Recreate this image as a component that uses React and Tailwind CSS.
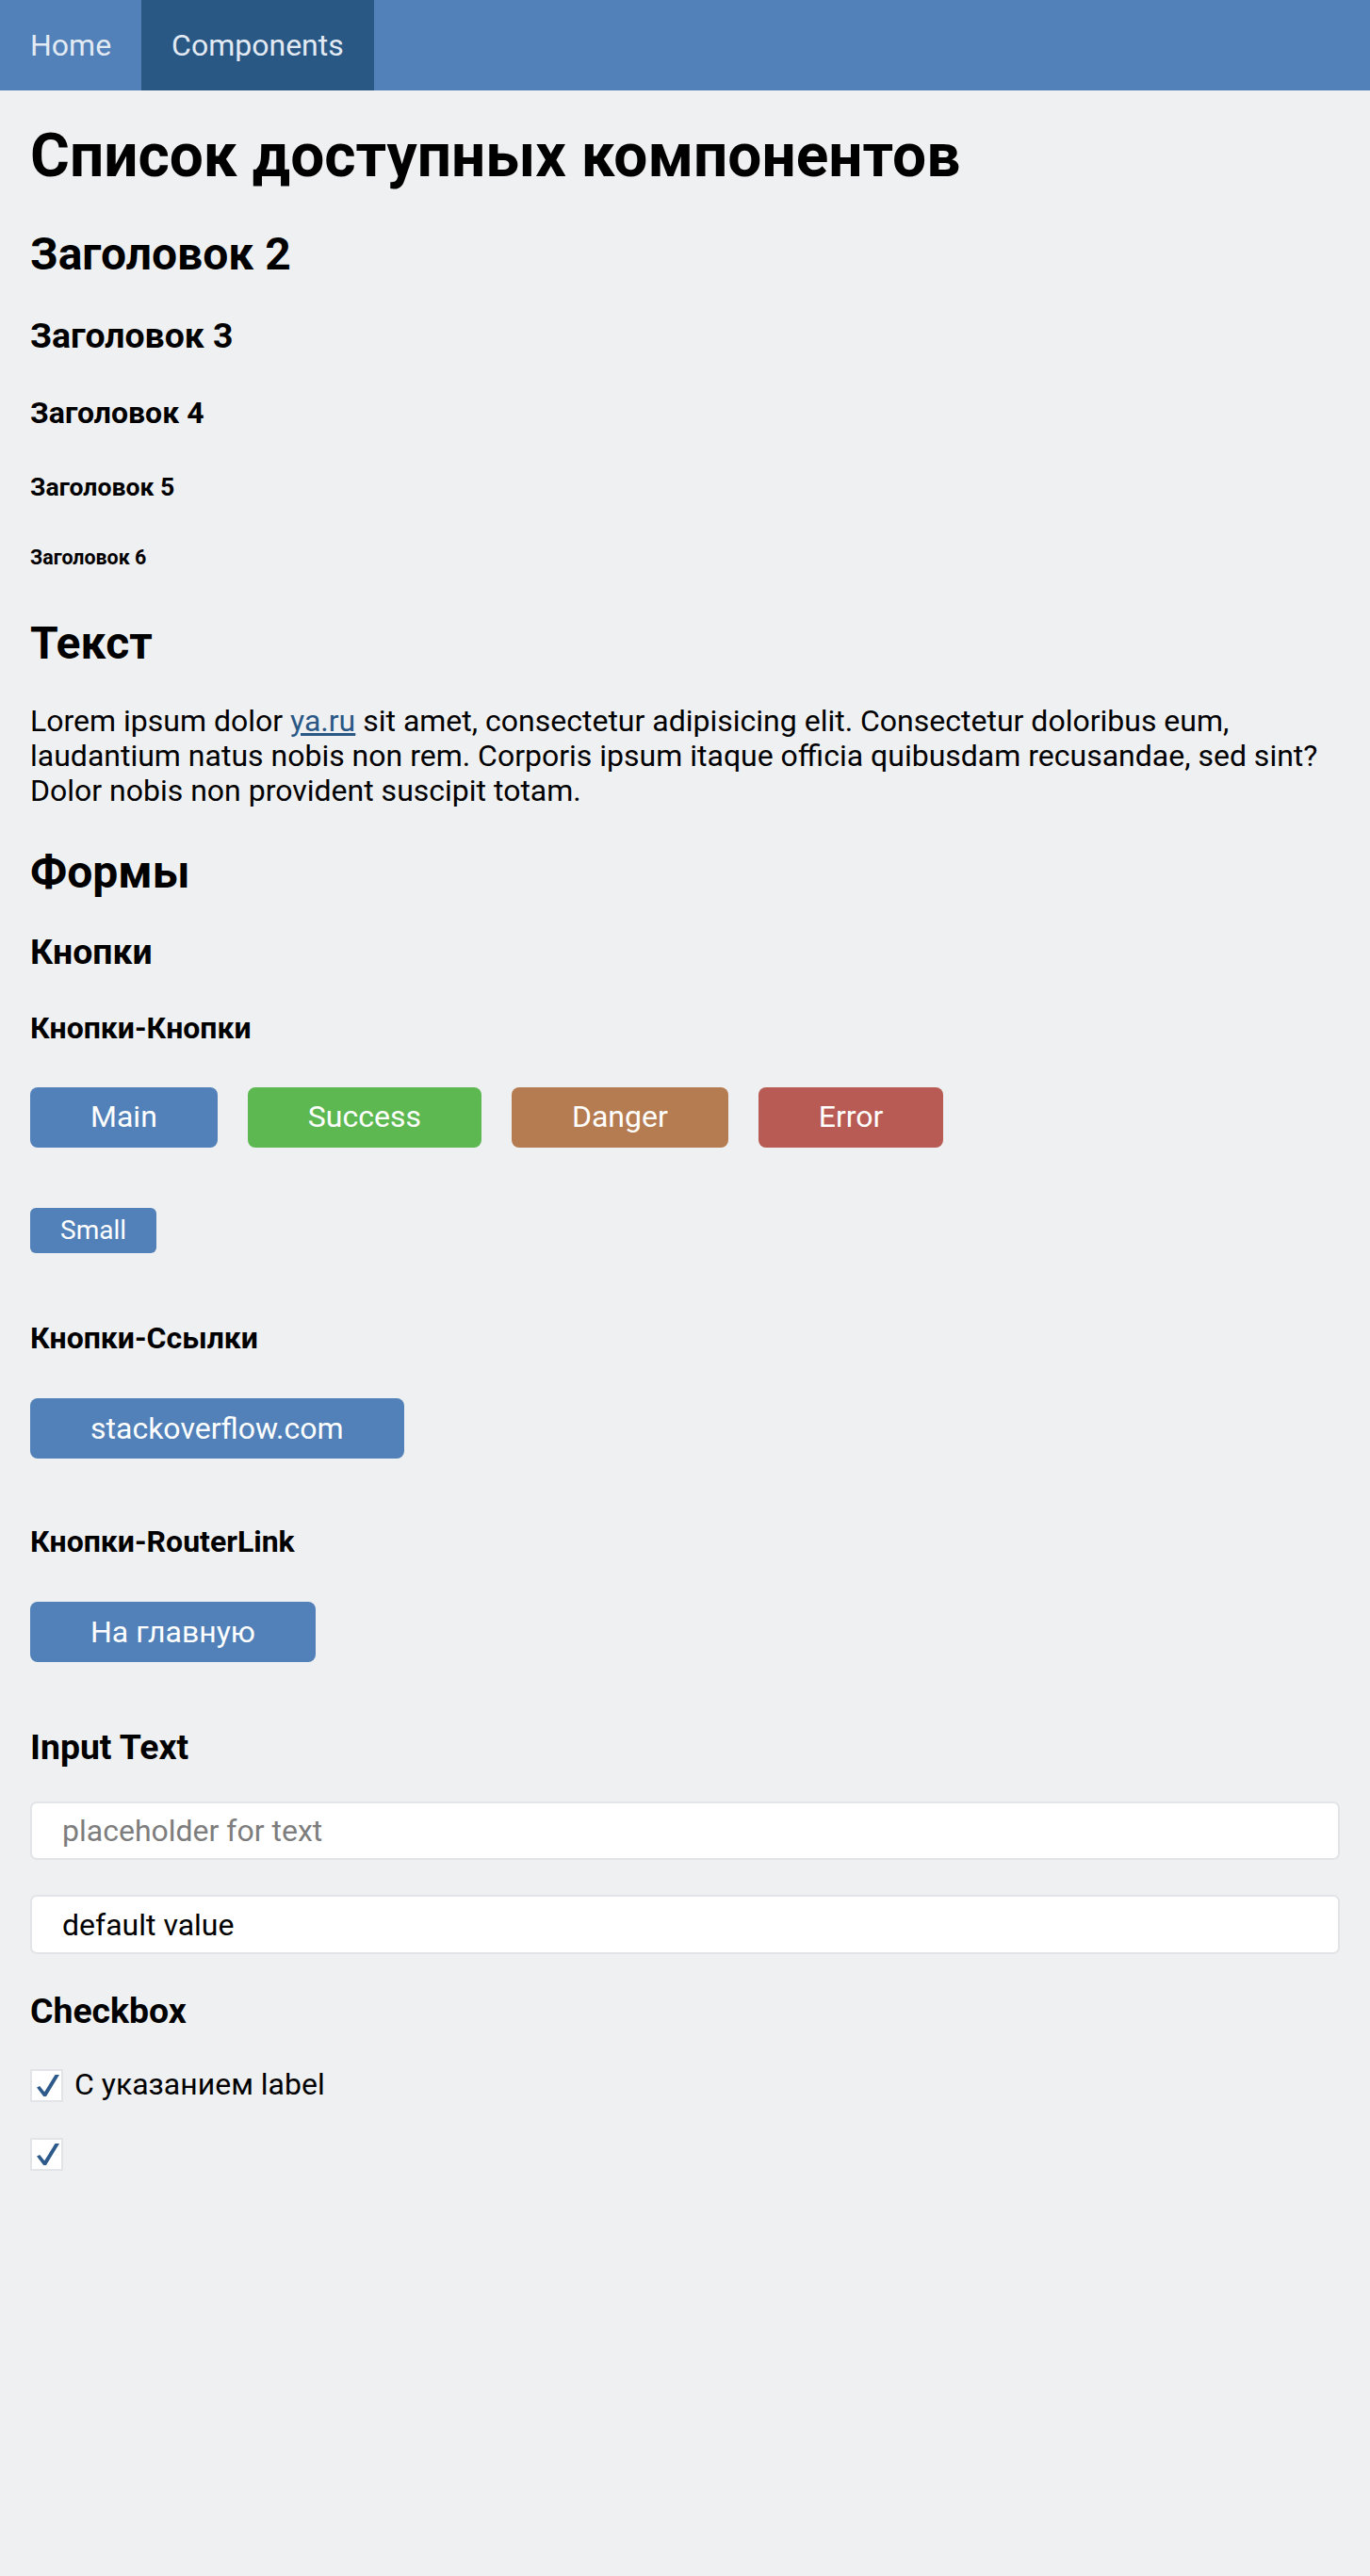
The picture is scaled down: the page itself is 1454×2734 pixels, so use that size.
import React from 'react';

const buttonColors = {
    main: 'bg-[#5181b8]',
    success: 'bg-[#5db852]',
    danger: 'bg-[#b67c51]',
    error: 'bg-[#b85b54]',
};

const Btn = ({ color = 'main', children }) => (
    <button
        className={`${buttonColors[color]} h-[64px] px-[64px] rounded-[8px] text-white text-[32px] leading-[37px]`}
    >
        {children}
    </button>
);

const Check = () => (
    <span className="w-[35px] h-[35px] shrink-0 bg-white border-2 border-[#e2e4e8] flex items-end justify-start pl-[5px] pb-[4px]">
        <svg width="24" height="23" viewBox="0 0 24 23">
            <path d="M0 13.5 L3.2 12 L8.2 18.3 L19.5 0 L24 0 L10 23 L7.2 23 Z" fill="#2d5a8b" />
        </svg>
    </span>
);

export default function App() {
    return (
        <div className="min-h-screen bg-[#eff0f2] text-black font-['Roboto',sans-serif]">
            <nav className="flex h-[96px] bg-[#5181b8] text-[#e2eaf4] text-[32px]">
                <a className="flex items-center px-[32px]">Home</a>
                <a className="flex items-center px-[32px] bg-[#2a5885]">Components</a>
            </nav>

            <main className="px-[32px] pb-[120px]">
                <h1 className="mt-[32px] text-[64px] leading-[75px] font-bold">Список доступных компонентов</h1>
                <h2 className="mt-[39.2px] text-[48px] leading-[56.25px] font-bold">Заголовок 2</h2>
                <h3 className="mt-[36.8px] text-[37.4px] leading-[43.8px] font-bold">Заголовок 3</h3>
                <h4 className="mt-[41.2px] text-[32px] leading-[37.5px] font-bold">Заголовок 4</h4>
                <h5 className="mt-[43.2px] text-[26.6px] leading-[31.2px] font-bold">Заголовок 5</h5>
                <h6 className="mt-[46.9px] text-[21.4px] leading-[25.1px] font-bold">Заголовок 6</h6>

                <h2 className="mt-[51.3px] text-[48px] leading-[56.25px] font-bold">Текст</h2>
                <p className="mt-[35.6px] text-[32px] leading-[36.7px]">
                    Lorem ipsum dolor <a className="text-[#2a5885] underline">ya.ru</a> sit amet, consectetur
                    adipisicing elit. Consectetur doloribus eum, laudantium natus nobis non rem. Corporis ipsum
                    itaque officia quibusdam recusandae, sed sint? Dolor nobis non provident suscipit totam.
                </p>

                <h2 className="mt-[40.3px] text-[48px] leading-[56.25px] font-bold">Формы</h2>
                <h3 className="mt-[35.2px] text-[37.4px] leading-[43.8px] font-bold">Кнопки</h3>
                <h4 className="mt-[40.2px] text-[32px] leading-[37.5px] font-bold">Кнопки-Кнопки</h4>
                <div className="mt-[43.2px] flex gap-[32px]">
                    <Btn color="main">Main</Btn>
                    <Btn color="success">Success</Btn>
                    <Btn color="danger">Danger</Btn>
                    <Btn color="error">Error</Btn>
                </div>
                <div className="mt-[64px]">
                    <button className="bg-[#5181b8] h-[48px] px-[32px] rounded-[6px] text-white text-[28px] leading-[33px]">
                        Small
                    </button>
                </div>

                <h4 className="mt-[72px] text-[32px] leading-[37.5px] font-bold">Кнопки-Ссылки</h4>
                <div className="mt-[44.5px]">
                    <a className="inline-flex items-center bg-[#5181b8] h-[64px] px-[64px] rounded-[8px] text-white text-[32px]">
                        stackoverflow.com
                    </a>
                </div>

                <h4 className="mt-[70.6px] text-[32px] leading-[37.5px] font-bold">Кнопки-RouterLink</h4>
                <div className="mt-[43.9px]">
                    <a className="inline-flex items-center bg-[#5181b8] h-[64px] px-[64px] rounded-[8px] text-white text-[32px]">
                        На главную
                    </a>
                </div>

                <h3 className="mt-[69.6px] text-[37.4px] leading-[43.8px] font-bold">Input Text</h3>
                <input
                    className="mt-[35.3px] block w-full h-[62px] px-[32px] bg-white border-2 border-[#e2e4e7] rounded-[7px] text-[32px] outline-none placeholder:text-[#7d7d7d]"
                    placeholder="placeholder for text"
                />
                <input
                    className="mt-[37px] block w-full h-[63px] px-[32px] bg-white border-2 border-[#e2e4e7] rounded-[7px] text-[32px] outline-none"
                    defaultValue="default value"
                />

                <h3 className="mt-[38.6px] text-[37.4px] leading-[43.8px] font-bold">Checkbox</h3>
                <label className="mt-[37.6px] flex items-center gap-[12px] text-[32px] leading-[37.5px]">
                    <Check />
                    С указанием label
                </label>
                <label className="mt-[36.7px] flex items-center">
                    <Check />
                </label>
            </main>
        </div>
    );
}
